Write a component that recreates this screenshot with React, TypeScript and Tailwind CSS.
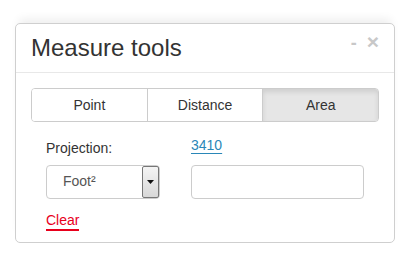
import React, { useState } from 'react';

const tabs = ['Point', 'Distance', 'Area'];

export default function App() {
  const [active, setActive] = useState('Area');

  return (
    <div className="w-[407px] h-[261px] bg-white pt-[23px] pl-[15px] font-['Liberation_Sans',Arial,sans-serif]">
      <div className="w-[380px] h-[220px] border border-[#cfcfcf] rounded-[5px] bg-white shadow-[0_-8px_10px_-4px_rgba(0,0,0,0.07)]">
        {/* Header */}
        <div className="h-[49px] border-b border-[#e8e8e8] flex items-start justify-between pl-[15px] pr-[15px]">
          <h1 className="text-[24px] leading-none text-[#333] mt-[12px]">Measure tools</h1>
          <div className="flex items-start gap-[10px] mt-[7px] text-[#c8c8c8] font-bold">
            <span className="text-[18px] leading-none mt-[3px]">-</span>
            <span className="text-[21px] leading-none">×</span>
          </div>
        </div>

        {/* Body */}
        <div className="px-[15px] pt-[15px]">
          <div className="flex h-[34px] rounded-[4px] border border-[#cccccc] overflow-hidden">
            {tabs.map((t, i) => (
              <button
                key={t}
                onClick={() => setActive(t)}
                className={`flex-1 text-[14px] text-[#333] ${i > 0 ? 'border-l border-[#cccccc]' : ''} ${
                  active === t ? 'bg-[#e6e6e6] shadow-[inset_0_3px_5px_rgba(0,0,0,0.1)]' : 'bg-white'
                }`}
              >
                {t}
              </button>
            ))}
          </div>

          <div className="flex mt-[11px] pl-[15px]">
            <div className="w-[145px]">
              <div className="text-[14px] text-[#333] mt-[7px] leading-[16px]">Projection:</div>
              <div className="mt-[9px] w-[114px] h-[34px] border border-[#ccc] rounded-[4px] flex items-stretch bg-white">
                <span className="flex-1 text-[14px] text-[#555] pl-[16px] leading-[30px]">Foot²</span>
                <span className="w-[17px] border border-[#777] rounded-[2px] bg-gradient-to-b from-[#f4f4f4] to-[#d8d8d8] flex items-center justify-center">
                  <svg width="7" height="4" viewBox="0 0 7 4">
                    <path d="M0 0H7L3.5 4Z" fill="#111" />
                  </svg>
                </span>
              </div>
            </div>
            <div>
              <a className="text-[14px] text-[#2a87b8] underline underline-offset-[3px] decoration-[#2a87b8] leading-[16px] block mt-[4px]">3410</a>
              <div className="mt-[12px] w-[173px] h-[34px] border border-[#ccc] rounded-[4px]"></div>
            </div>
          </div>

          <div className="pl-[15px] mt-[9px]">
            <a className="text-[14px] text-[#e8001c] leading-[16px] inline-block border-b-2 border-[#e8001c] pb-[1px]">Clear</a>
          </div>
        </div>
      </div>
    </div>
  );
}
